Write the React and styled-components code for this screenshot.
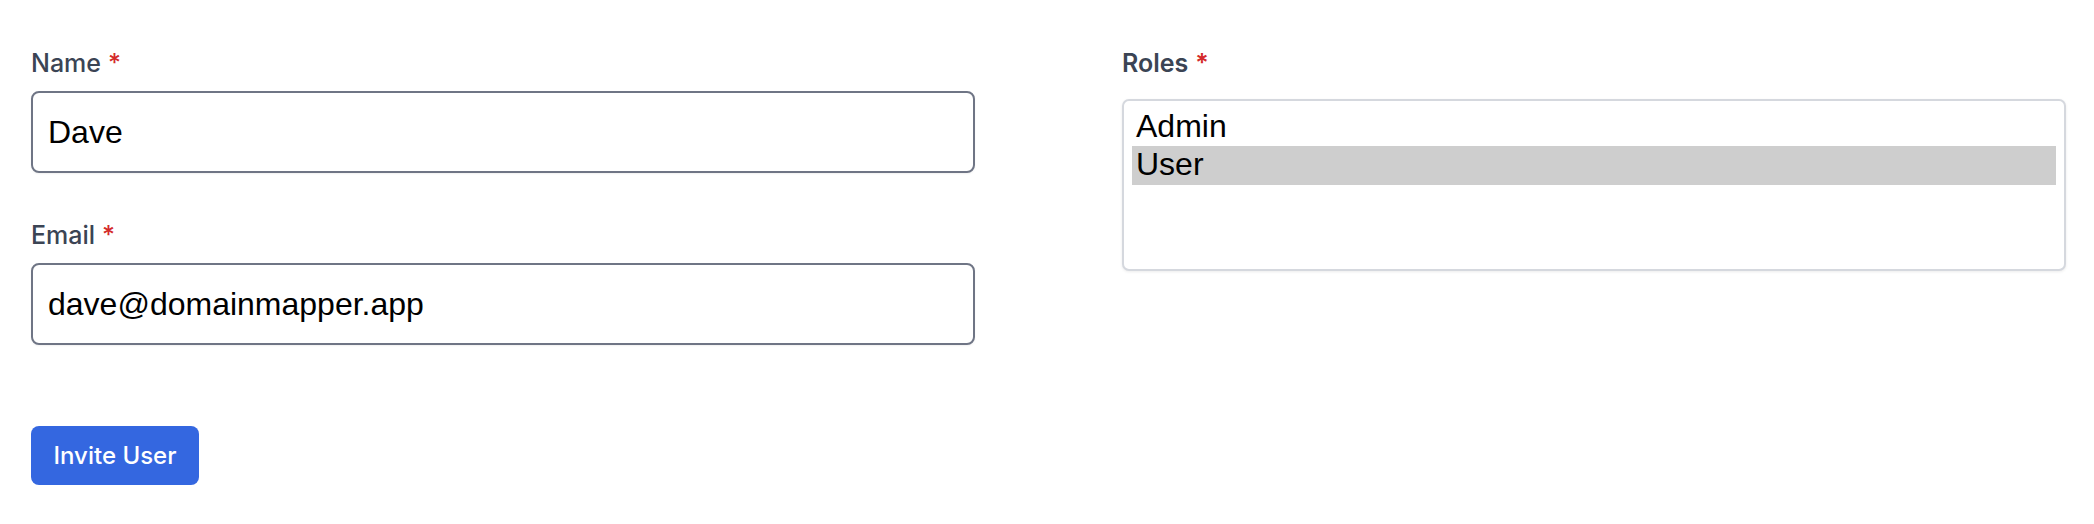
import React from "react";
import styled, { createGlobalStyle } from "styled-components";

const GlobalStyle = createGlobalStyle`
  body {
    margin: 0;
    background: #ffffff;
    font-family: Inter, "Noto Sans", sans-serif;
  }
`;

const Form = styled.form`
  display: grid;
  grid-template-columns: 944px 944px;
  column-gap: 147px;
  align-items: start;
  padding: 45px 28px 0 31px;
`;

const Column = styled.div`
  display: flex;
  flex-direction: column;
  gap: 44px;
`;

const Field = styled.div`
  display: flex;
  flex-direction: column;
  gap: ${(p) => p.$gap || 10}px;
`;

const Label = styled.label`
  font-family: Inter, sans-serif;
  font-size: 25px;
  line-height: 36px;
  font-weight: ${(p) => p.$weight || 500};
  color: #3b4454;
`;

const Required = styled.span`
  color: #d42b2b;
  margin-left: 7px;
`;

const Input = styled.input`
  box-sizing: border-box;
  width: 100%;
  height: 82px;
  padding: 0 15px;
  border: 2px solid #6f7585;
  border-radius: 8px;
  box-shadow: 0 1px 2px rgba(0, 0, 0, 0.06);
  font-family: "Liberation Sans", Arial, sans-serif;
  font-size: 32px;
  color: #000;
  background: #fff;
  outline: none;
`;

const RoleSelect = styled.select`
  box-sizing: border-box;
  width: 100%;
  height: 172px;
  padding: 7px 8px;
  border: 2px solid #d5d8de;
  border-radius: 7px;
  box-shadow: 0 1px 3px rgba(0, 0, 0, 0.08);
  font-family: "Liberation Sans", Arial, sans-serif;
  font-size: 32px;
  color: #000;
  background: #fff;
  outline: none;
  overflow: hidden;

  option {
    padding: 0 4px;
    line-height: 38px;
    height: 38px;
    color: #000;
  }

  option:checked {
    background: #cecece linear-gradient(#cecece, #cecece);
    color: #000;
  }
`;

const SubmitButton = styled.button`
  align-self: flex-start;
  margin-top: 37px;
  width: 168px;
  height: 59px;
  border: none;
  border-radius: 8px;
  background-color: #3467e0;
  color: #fff;
  font-family: Inter, sans-serif;
  font-size: 24px;
  font-weight: 500;
  cursor: pointer;
`;

const App = () => {
  return (
    <>
      <GlobalStyle />
      <Form onSubmit={(e) => e.preventDefault()}>
        <Column>
          <Field>
            <Label htmlFor="name">
              Name<Required>*</Required>
            </Label>
            <Input id="name" type="text" defaultValue="Dave" />
          </Field>
          <Field>
            <Label htmlFor="email">
              Email<Required>*</Required>
            </Label>
            <Input id="email" type="email" defaultValue="dave@domainmapper.app" />
          </Field>
          <SubmitButton type="submit">Invite User</SubmitButton>
        </Column>

        <Column>
          <Field $gap={18}>
            <Label htmlFor="roles" $weight={600}>
              Roles<Required>*</Required>
            </Label>
            <RoleSelect id="roles" multiple size={4} defaultValue={["user"]}>
              <option value="admin">Admin</option>
              <option value="user">User</option>
            </RoleSelect>
          </Field>
        </Column>
      </Form>
    </>
  );
};

export default App;
